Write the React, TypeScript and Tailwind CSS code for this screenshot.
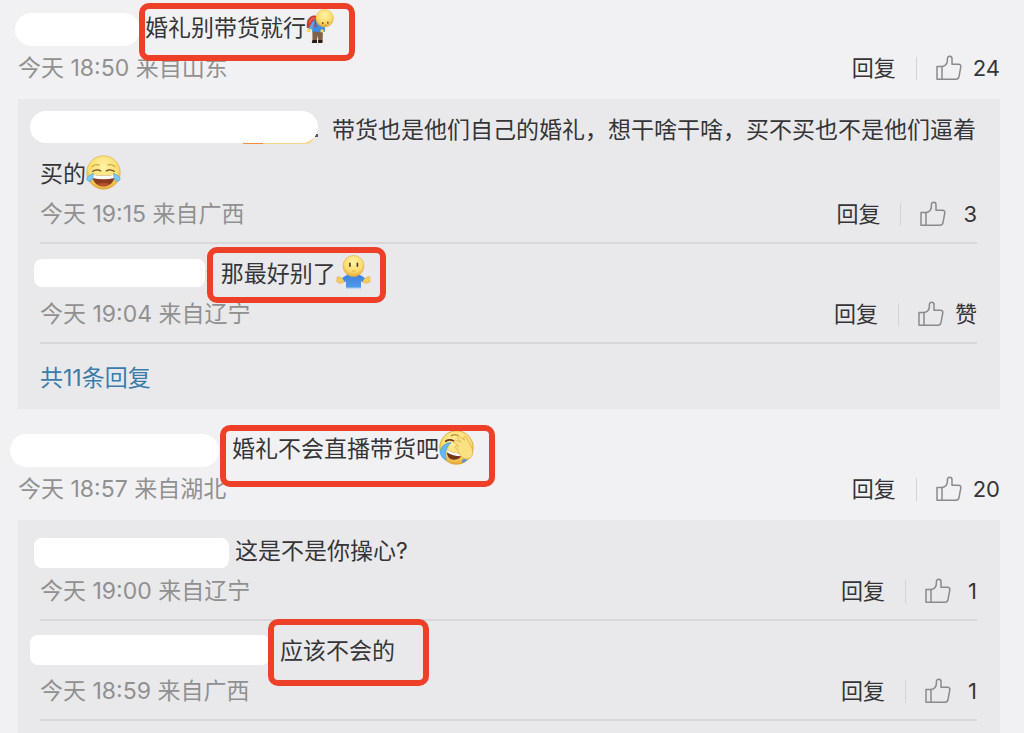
import type { ReactNode } from "react";

function ThumbIcon() {
  return (
    <svg width="26" height="26" viewBox="0 0 26 26" fill="none" stroke="#8a8a8c" strokeWidth="1.5" strokeLinejoin="round" aria-hidden="true">
      <path d="M1 11.500H6V24.200H1Z" />
      <path d="M6 11.500C9 11 11.400 8.600 11.400 5.200V3.600C11.400 .5 16 .5 16 3.800V9.300H22.500C24.200 9.300 25 10.300 24.800 11.800L23 21.600C22.600 23.300 21.700 24.200 20 24.200H6" />
    </svg>
  );
}

const emojiClass = "-mt-1.5 inline-block align-middle";

function FaceGradient({ id }: { id: string }) {
  return (
    <radialGradient id={id} cx="50%" cy="32%" r="68%">
      <stop offset="0" stopColor="#fff3a6" />
      <stop offset=".65" stopColor="#fbdc6c" />
      <stop offset="1" stopColor="#e6a93c" />
    </radialGradient>
  );
}

function TearsOfJoy() {
  return (
    <svg className={emojiClass} width="35" height="35" viewBox="0 0 36 36" role="img" aria-label="笑cry">
      <defs><FaceGradient id="joy" /></defs>
      <circle cx="18" cy="18" r="17.2" fill="url(#joy)" stroke="#dba23c" strokeWidth=".6" />
      <path d="M6 11.8Q9.500 8.600 13.600 10.200M22.400 10.200Q26.500 8.600 30 11.800" fill="none" stroke="#c38a33" strokeWidth="1" strokeLinecap="round" />
      <path d="M7 16.800Q11.200 14 15.200 16.400M20.800 16.400Q24.800 14 29 16.800" fill="none" stroke="#6b3f1d" strokeWidth="1.300" strokeLinecap="round" />
      <path d="M6.300 20.200Q18 22.500 29.700 20.200C29.500 27.500 24.500 32.200 18 32.200S6.500 27.500 6.300 20.200Z" fill="#8d3b20" />
      <path d="M6.300 20.200Q18 22.500 29.700 20.200L29.200 23.600Q18 26.200 6.800 23.600Z" fill="#fff" />
      <path d="M11.500 29.900Q18 27.600 24.500 29.900Q21.500 32.200 18 32.200T11.500 29.900Z" fill="#b9502f" />
      <path d="M7.500 18.800C7.600 24 6.700 26.900 3.800 27C.4 27 .2 23.500 2.300 21.800C4 20.600 6.200 20.100 7.500 18.800ZM28.500 18.800C28.400 24 29.300 26.900 32.200 27C35.600 27 35.800 23.500 33.700 21.800C32 20.600 29.800 20.100 28.500 18.800Z" fill="#7cc8f2" stroke="#4a9edb" strokeWidth=".6" />
    </svg>
  );
}

function BowingBackpacker() {
  return (
    <svg className={emojiClass} width="35" height="35" viewBox="0 0 36 36" role="img" aria-label="弯腰鞠躬">
      <defs><FaceGradient id="bow" /></defs>
      <path d="M6.500 22H17.500L17 33.400H12.700L12.100 27L10.900 33.400H6.700Z" fill="#80624a" />
      <path d="M6.700 32H11.300V34.900H5.900ZM12.500 32H16.900V34.900H12.500Z" fill="#2d1b15" />
      <path d="M1.400 14C2 9 6 6.600 10 7.200L12 14L6 20L1.200 19Z" fill="#d63c2e" stroke="#9d2925" strokeWidth=".8" />
      <path d="M3.500 14Q5 9.800 9 9" fill="none" stroke="#f17c60" strokeWidth="1.100" />
      <path d="M6 15Q7.500 10.300 12 9L19.500 16V23.500H6.500Z" fill="#3f8fe4" />
      <path d="M9 13L6 21L2.500 20.200L6.300 13.600Z" fill="#5aa7f1" />
      <path d="M11.500 9Q8.500 14 10 19" fill="none" stroke="#c93b30" strokeWidth="1.700" />
      <circle cx="2.800" cy="22" r="2" fill="#f9d95c" />
      <circle cx="16.500" cy="22.500" r="1.700" fill="#f9d95c" />
      <circle cx="19.200" cy="9.500" r="9" fill="url(#bow)" stroke="#e0b347" strokeWidth=".5" />
      <path d="M17.300 14V15M22.500 13.500V14.500" stroke="#68401c" strokeWidth="1.500" strokeLinecap="round" />
      <path d="M19.500 16.700H21" stroke="#a96c28" strokeWidth=".8" />
    </svg>
  );
}

function Shrug() {
  return (
    <svg className={emojiClass} width="35" height="35" viewBox="0 0 36 36" role="img" aria-label="摊手">
      <defs>
        <FaceGradient id="shrug" />
        <linearGradient id="shirt" x1="0" y1="0" x2="0" y2="1">
          <stop offset="0" stopColor="#3d80df" />
          <stop offset=".85" stopColor="#4f99ec" />
          <stop offset="1" stopColor="#c6def7" />
        </linearGradient>
      </defs>
      <path d="M8 24C5.500 25 3 21.500 1.500 22.500C.3 23.800 2 24.600 1 26C.4 28.300 3.500 29.500 6.500 28.600L11 26.400ZM28 24C30.500 25 33 21.500 34.500 22.500C35.700 23.800 34 24.600 35 26C35.600 28.300 32.500 29.500 29.500 28.600L25 26.400Z" fill="#f8cd59" stroke="#d9a036" strokeWidth=".6" />
      <path d="M12 20.200H24Q26.600 21 29.500 23.700L27 28L25.700 26.500V34.800H10.300V26.500L9 28L6.500 23.700Q9.400 21 12 20.200Z" fill="url(#shirt)" />
      <ellipse cx="18" cy="11.400" rx="10.800" ry="10.900" fill="url(#shrug)" stroke="#dfa842" strokeWidth=".6" />
      <path d="M14.300 8.500V11.500M22 8.500V11.500" stroke="#60391d" strokeWidth="1.700" strokeLinecap="round" />
      <path d="M16.600 16.500H20" stroke="#c9923a" strokeWidth=".7" />
    </svg>
  );
}

function LaughFacepalm() {
  return (
    <svg className={emojiClass} width="35" height="35" viewBox="0 0 36 36" role="img" aria-label="允悲">
      <defs><FaceGradient id="palm" /></defs>
      <circle cx="18" cy="18" r="17.200" fill="url(#palm)" stroke="#d99d35" strokeWidth=".8" />
      <path d="M12.500 6Q15.500 4 19.500 5.500" fill="none" stroke="#a96c25" strokeWidth="1.100" strokeLinecap="round" />
      <path d="M7 11.500Q11 8.800 15.500 11.500" fill="none" stroke="#6d3c1c" strokeWidth="1.900" strokeLinecap="round" />
      <path d="M8.500 20Q14.500 24.500 24 24.200C23 29.500 18 31.300 13.500 30.300C9 29.300 7.400 24.500 8.500 20Z" fill="#75331c" />
      <path d="M8.500 20Q14.500 24.500 24 24.200L23.200 27Q14 27 8.200 23Z" fill="#fff" />
      <path d="M12.500 13C6.500 12.500 .6 18 1.100 24Q3 29.500 7.500 31C5.500 24 7.500 17.500 12.500 13Z" fill="#67b5ef" stroke="#4593d8" strokeWidth=".5" />
      <path d="M24 30.500C25.500 29.500 27.500 29.500 29 30.500Q27 33 23.600 34Z" fill="#4b94df" />
      <path d="M16.500 13.500C14.200 12.600 15.200 9.900 17.500 10.400L22.500 12.300L19.300 9.300C18 7.500 20 6 21.700 7L26.300 10.500L25.300 8.300C25 6.300 27.300 6.300 28.300 8L31.800 14.500Q35 19 34.600 24C34 29.300 28.800 31.300 25 28.800C21.300 26.500 19.700 22 18.700 19.500C15.800 18.800 15.700 16.400 17.700 16.400L20 16.800Z" fill="#fce183" stroke="#d9a746" strokeWidth=".7" />
    </svg>
  );
}

function Mask({ className }: { className: string }) {
  return <span className={`inline-block bg-white align-middle ${className}`} />;
}

function Highlight({ box, children }: { box: string; children: ReactNode }) {
  return (
    <span className="relative inline-block">
      {children}
      <span className={`pointer-events-none absolute z-10 rounded-[10px] border-6 border-[#ee4028] ${box}`} />
    </span>
  );
}

function Meta({ time, likes }: { time: string; likes: string }) {
  return (
    <div className="flex h-9 items-center justify-between text-[22px]">
      <span className="text-[23px] whitespace-nowrap text-[#909091]">{time}</span>
      <div className="flex items-center">
        <button type="button">回复</button>
        <span className="mr-[19px] ml-5 h-[23px] w-px bg-[#d3d3d6]" />
        <button type="button" aria-label={`赞 ${likes}`} className="flex items-center gap-[11px]">
          <ThumbIcon />
          <span className={likes.length === 1 && likes !== "赞" ? "pl-1.5" : ""}>{likes}</span>
        </button>
      </div>
    </div>
  );
}

function Reply({ children, time, likes }: { children: ReactNode; time: string; likes: string }) {
  return (
    <li className="border-b-2 border-[#d8d8da] pt-2 pb-[10px]">
      <p className="text-[23px] leading-[44px]">{children}</p>
      <Meta time={time} likes={likes} />
    </li>
  );
}

export default function App() {
  return (
    <main
      lang="zh-CN"
      className="min-h-screen bg-[#f1f1f3] text-[#353537] [font-family:Inter,'Noto_Sans_CJK_SC',sans-serif]"
    >
      <article className="pt-1.5 pr-6 pl-[18px]">
        <p className="text-[23px] leading-[44px]">
          <Mask className="mr-[5px] -ml-[3px] h-[33px] w-[125px] rounded-full" />
          <Highlight box="-top-[3px] -left-[6px] h-[58px] w-[216px]">
            婚礼别带货就行<BowingBackpacker />
          </Highlight>
        </p>
        <Meta time="今天 18:50 来自山东" likes="24" />
        <section className="mt-[13px] bg-[#e9e9eb] pt-px pr-[23px] pl-[22px]">
          <ul>
            <Reply time="今天 19:15 来自广西" likes="3">
              <span className="relative -mt-2.5 mr-[14px] -ml-[10px] inline-block h-8 w-72 align-middle">
                <span className="absolute right-1 -bottom-px h-4 w-[71px] rounded-br-lg border-b-2 border-[#f8d58c] bg-[#f7ce55]" />
                <span className="absolute -bottom-px left-[213px] h-4 w-5 bg-[#f58a3c]" />
                <span className="absolute right-0 bottom-[6px] size-[3px] bg-[#55555a]" />
                <span className="absolute inset-0 rounded-full bg-white" />
              </span>
              带货也是他们自己的婚礼，想干啥干啥，买不买也不是他们逼着买的<TearsOfJoy />
            </Reply>
            <Reply time="今天 19:04 来自辽宁" likes="赞">
              <Mask className="-mt-1.5 -ml-[6px] h-7 w-[171px] rounded-lg" />
              <span className="mr-[9px] text-[#8a8a8b]">:</span>
              <Highlight box="-top-[5px] -left-[14px] h-14 w-[179px]">
                那最好别了<Shrug />
              </Highlight>
            </Reply>
          </ul>
          <div className="flex h-[65px] items-center pt-1">
            <a href="#replies" className="text-[23px] text-[#3b7cab]">共11条回复</a>
          </div>
        </section>
      </article>

      <article className="pt-[18px] pr-6 pl-[18px]">
        <p className="text-[23px] leading-[44px]">
          <Mask className="mr-[13px] -ml-[8px] h-[33px] w-[209px] rounded-full" />
          <Highlight box="-top-[2px] -left-[12px] h-[62px] w-[275px]">
            婚礼不会直播带货吧<LaughFacepalm />
          </Highlight>
        </p>
        <Meta time="今天 18:57 来自湖北" likes="20" />
        <section id="replies" className="mt-[13px] bg-[#e9e9eb] pt-px pr-[23px] pb-3 pl-[22px]">
          <ul>
            <Reply time="今天 19:00 来自辽宁" likes="1">
              <Mask className="mr-1.5 -ml-[6px] h-[30px] w-[195px] rounded-lg" />
              这是不是你操心?
            </Reply>
            <Reply time="今天 18:59 来自广西" likes="1">
              <Mask className="-mt-1.5 mr-2.5 -ml-[10px] h-[30px] w-60 rounded-lg" />
              <Highlight box="-top-[10px] -left-[12px] h-[67px] w-[161px]">应该不会的</Highlight>
            </Reply>
          </ul>
        </section>
      </article>
    </main>
  );
}
